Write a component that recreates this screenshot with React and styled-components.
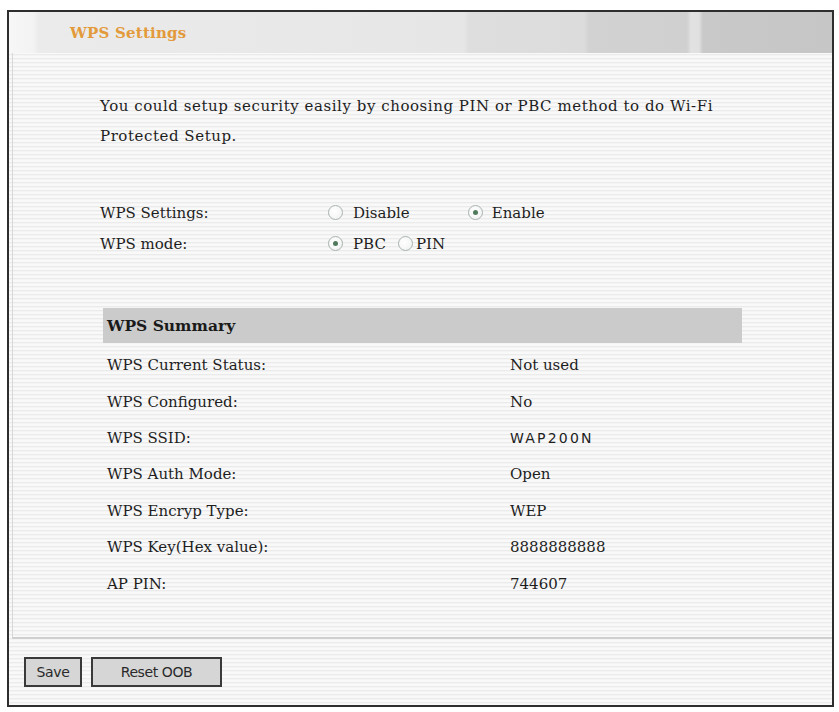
import React from "react";
import styled, { createGlobalStyle } from "styled-components";

const Global = createGlobalStyle`
  html, body { margin: 0; padding: 0; background: #ffffff; }
  body { font-family: "DejaVu Serif", "Liberation Serif", serif; }
`;

const Page = styled.div`
  width: 839px;
  height: 712px;
  padding: 10px 5px 5px 7px;
  box-sizing: border-box;
`;

const Panel = styled.div`
  height: 100%;
  box-sizing: border-box;
  border: 2px solid #2e2e2e;
  display: flex;
  flex-direction: column;
  background: repeating-linear-gradient(
    to bottom,
    #f9f9f9 0px,
    #f9f9f9 2px,
    #ebebeb 2px,
    #ebebeb 3px,
    #f4f4f4 3px,
    #f4f4f4 4px
  );
`;

const Header = styled.div`
  height: 41px;
  flex: none;
  display: flex;
  align-items: center;
  padding-left: 61px;
  background: linear-gradient(
    to right,
    #f7f7f7 0px,
    #f3f3f3 24px,
    #ebebeb 30px,
    #e6e6e6 455px,
    #dedede 460px,
    #dcdcdc 575px,
    #d2d2d2 580px,
    #d0d0d0 678px,
    #e2e2e2 682px,
    #e0e0e0 690px,
    #c9c9c9 694px,
    #c6c6c6 100%
  );
`;

const Title = styled.span`
  color: #e39a3a;
  font-weight: bold;
  font-size: 15px;
  letter-spacing: 0.2px;
`;

const Content = styled.div`
  flex: 1;
  padding: 38px 0 0 87px;
  border-left: 1px solid #d8d8d8;
  margin-left: 3px;
`;

const Intro = styled.p`
  margin: 0;
  width: 650px;
  font-size: 15px;
  letter-spacing: 0.55px;
  line-height: 30px;
  color: #1e1e1e;
`;

const Settings = styled.div`
  margin-top: 46px;
  display: flex;
  flex-direction: column;
`;

const SettingRow = styled.div`
  height: 31px;
  display: flex;
  align-items: center;
  font-size: 15px;
  color: #1e1e1e;
`;

const SettingLabel = styled.span`
  width: 228px;
  flex: none;
`;

const Option = styled.label`
  display: flex;
  align-items: center;
  gap: ${(p) => p.$gap || 9}px;
  margin-right: ${(p) => p.$mr || 0}px;
`;

const Radio = styled.span`
  width: 15px;
  height: 15px;
  box-sizing: border-box;
  border-radius: 50%;
  border: 1px solid #a9b3ae;
  background: radial-gradient(circle at 40% 40%, #ffffff 0%, #eef0ef 100%);
  display: flex;
  align-items: center;
  justify-content: center;
  &::after {
    content: "";
    width: 5px;
    height: 5px;
    border-radius: 50%;
    background: ${(p) => (p.$checked ? "#4f7a5c" : "transparent")};
  }
`;

const Summary = styled.div`
  margin-top: 49px;
  margin-left: 3px;
  width: 639px;
  display: flex;
  flex-direction: column;
`;

const SummaryHead = styled.div`
  height: 35px;
  background: #cbcbcb;
  display: flex;
  align-items: center;
  padding-left: 4px;
  font-weight: bold;
  font-size: 15.5px;
  color: #1a1a1a;
`;

const SummaryBody = styled.div`
  padding-top: 4px;
  display: flex;
  flex-direction: column;
`;

const SummaryRow = styled.div`
  height: 36.4px;
  display: grid;
  grid-template-columns: 403px 1fr;
  align-items: center;
  padding-left: 4px;
  font-size: 15px;
  color: #1e1e1e;
`;

const Value = styled.span`
  font-family: ${(p) => (p.$sans ? '"DejaVu Sans", "Liberation Sans", sans-serif' : "inherit")};
  font-size: ${(p) => (p.$sans ? "14px" : "inherit")};
  letter-spacing: ${(p) => (p.$sans ? "2.2px" : "0")};
`;

const Footer = styled.div`
  flex: none;
  height: 68px;
  border-top: 2px solid #cfcfcf;
  margin-left: 3px;
  display: flex;
  align-items: flex-start;
  gap: 9px;
  padding: 18px 0 0 12px;
  box-sizing: border-box;
`;

const Button = styled.button`
  height: 30px;
  width: ${(p) => p.$w}px;
  box-sizing: border-box;
  border: 2px solid #3a3a3a;
  background: #d6d6d6;
  font-family: "DejaVu Sans", "Liberation Sans", sans-serif;
  font-size: 14px;
  color: #2a2a2a;
  padding: 0;
  letter-spacing: -0.4px;
`;

const rows = [
  ["WPS Current Status:", "Not used"],
  ["WPS Configured:", "No"],
  ["WPS SSID:", "WAP200N", true],
  ["WPS Auth Mode:", "Open"],
  ["WPS Encryp Type:", "WEP"],
  ["WPS Key(Hex value):", "8888888888"],
  ["AP PIN:", "744607"],
];

export default function App() {
  return (
    <Page>
      <Global />
      <Panel>
        <Header>
          <Title>WPS Settings</Title>
        </Header>
        <Content>
          <Intro>
            You could setup security easily by choosing PIN or PBC method to do Wi-Fi Protected Setup.
          </Intro>
          <Settings>
            <SettingRow>
              <SettingLabel>WPS Settings:</SettingLabel>
              <Option $mr={58} $gap={10}>
                <Radio />
                Disable
              </Option>
              <Option $gap={9}>
                <Radio $checked />
                Enable
              </Option>
            </SettingRow>
            <SettingRow>
              <SettingLabel>WPS mode:</SettingLabel>
              <Option $mr={12} $gap={10}>
                <Radio $checked />
                PBC
              </Option>
              <Option $gap={3}>
                <Radio />
                PIN
              </Option>
            </SettingRow>
          </Settings>
          <Summary>
            <SummaryHead>WPS Summary</SummaryHead>
            <SummaryBody>
              {rows.map(([label, value, sans]) => (
                <SummaryRow key={label}>
                  <span>{label}</span>
                  <Value $sans={sans}>{value}</Value>
                </SummaryRow>
              ))}
            </SummaryBody>
          </Summary>
        </Content>
        <Footer>
          <Button $w={58}>Save</Button>
          <Button $w={131}>Reset OOB</Button>
        </Footer>
      </Panel>
    </Page>
  );
}
